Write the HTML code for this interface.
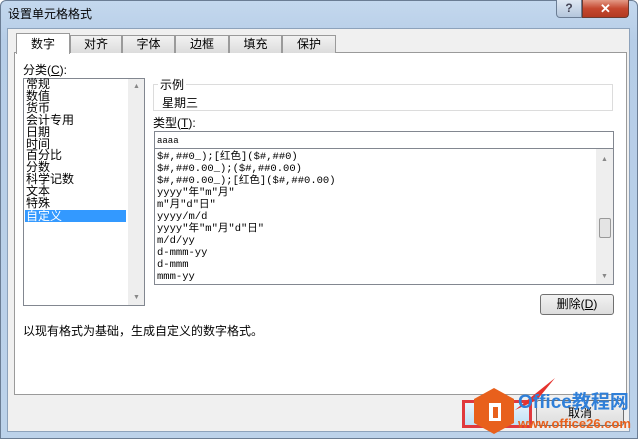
<!DOCTYPE html><html><head><meta charset="utf-8"><style>
*{margin:0;padding:0;box-sizing:border-box}
body{width:638px;height:439px;overflow:hidden;background:#fff;font-family:"Liberation Sans","Noto Sans CJK SC",sans-serif;font-size:12px;color:#000;position:relative}
.a{position:absolute}
.win{left:0;top:0;width:638px;height:439px;background:linear-gradient(#c4d8ee,#b6cde7 40px,#bcd2ea);border:1px solid #6b7d94;border-radius:6px 6px 0 0}
.body{left:7px;top:28px;width:623px;height:404px;background:#f0f0f0;border:1px solid #8da2bb}
.panel{left:14px;top:52px;width:613px;height:343px;background:#fff;border:1px solid #9a9a9a}
.tab{top:35px;height:18px;border:1px solid #9a9a9a;border-bottom:none;background:linear-gradient(#f2f2f2,#dcdcdc);text-align:center;line-height:16px;font-size:12px}
.box{border:1px solid #828790;background:#fff}
.sb{background:#eeeeee}
.mono{font-family:"Liberation Mono","Noto Sans CJK SC",monospace;font-size:10.5px;line-height:12px;white-space:pre}
</style></head><body>
<div class="a win"></div>
<div class="a" style="left:8px;top:5px;font-size:12px">设置单元格格式</div>
<div class="a" style="left:556px;top:0;width:26px;height:18px;background:linear-gradient(#dfe8f3,#b4c6dc);border:1px solid #6b7d94;border-top:none;border-radius:0 0 0 4px;text-align:center;color:#445;font-weight:bold;font-size:12px;line-height:17px">?</div>
<div class="a" style="left:582px;top:0;width:47px;height:18px;background:linear-gradient(#e39a86,#c5482f 50%,#b33a22);border:1px solid #6b3a30;border-top:none;border-radius:0 0 4px 0;text-align:center;color:#fff;font-weight:bold;font-size:13px;line-height:17px">✕</div>
<div class="a body"></div>
<div class="a panel"></div>
<div class="a tab" style="left:16px;top:33px;width:54px;height:21px;background:#fff;z-index:2;line-height:20px">数字</div>
<div class="a tab" style="left:70px;width:52px">对齐</div>
<div class="a tab" style="left:122px;width:53px">字体</div>
<div class="a tab" style="left:175px;width:54px">边框</div>
<div class="a tab" style="left:229px;width:53px">填充</div>
<div class="a tab" style="left:282px;width:54px">保护</div>
<div class="a" style="left:23px;top:61px">分类(<u>C</u>):</div>
<div class="a box" style="left:23px;top:78px;width:122px;height:228px"></div>
<div class="a sb" style="left:128px;top:79px;width:16px;height:226px"></div>
<div class="a" style="left:133px;top:83px;font-size:7px;color:#888">▲</div>
<div class="a" style="left:133px;top:294px;font-size:7px;color:#888">▼</div>
<div class="a" style="left:26px;top:79px;line-height:11.9px;font-size:12px">常规<br>数值<br>货币<br>会计专用<br>日期<br>时间<br>百分比<br>分数<br>科学记数<br>文本<br>特殊</div>
<div class="a" style="left:25px;top:210px;width:101px;height:12px;background:#3399ff;color:#fff;line-height:12px;padding-left:1px">自定义</div>
<div class="a" style="left:153px;top:84px;width:460px;height:27px;border:1px solid #dcdcdc;border-top:none"></div>
<div class="a" style="left:153px;top:84px;width:460px;border-top:1px solid #dcdcdc"></div>
<div class="a" style="left:158px;top:76px;background:#fff;padding:0 2px">示例</div>
<div class="a" style="left:162px;top:94px">星期三</div>
<div class="a" style="left:153px;top:114px">类型(<u>T</u>):</div>
<div class="a box" style="left:154px;top:131px;width:460px;height:18px"></div>
<div class="a mono" style="left:157px;top:135px;font-size:9px">aaaa</div>
<div class="a box" style="left:154px;top:148px;width:460px;height:137px"></div>
<div class="a sb" style="left:596px;top:149px;width:17px;height:135px"></div>
<div class="a" style="left:599px;top:218px;width:12px;height:20px;border:1px solid #999;background:#e4e4e4;border-radius:2px"></div>
<div class="a" style="left:601px;top:156px;font-size:7px;color:#888">▲</div>
<div class="a" style="left:601px;top:273px;font-size:7px;color:#888">▼</div>
<div class="a mono" style="left:157px;top:151px">$#,##0_);[红色]($#,##0)
$#,##0.00_);($#,##0.00)
$#,##0.00_);[红色]($#,##0.00)
yyyy"年"m"月"
m"月"d"日"
yyyy/m/d
yyyy"年"m"月"d"日"
m/d/yy
d-mmm-yy
d-mmm
mmm-yy</div>
<div class="a" style="left:540px;top:294px;width:74px;height:21px;border:1px solid #707070;border-radius:3px;background:linear-gradient(#f2f2f2,#dddddd);text-align:center;line-height:19px">删除(<u>D</u>)</div>
<div class="a" style="left:23px;top:322px">以现有格式为基础，生成自定义的数字格式。</div>
<div class="a" style="left:462px;top:400px;width:70px;height:28px;border:3px solid #e0393e;background:linear-gradient(#e8f4fc,#bfe0f6)"></div>
<div class="a" style="left:536px;top:400px;width:88px;height:26px;border:1px solid #707070;border-radius:3px;background:linear-gradient(#f2f2f2,#dddddd);text-align:center;line-height:24px">取消</div>
<svg class="a" style="left:470px;top:370px" width="168" height="69">
<path d="M45 40 L85 8 L67 30 Z" fill="#e5322d"/>
<path d="M38 0 L58 11 L58 35 L38 46 L18 35 L18 11 Z" transform="translate(-14,18)" fill="#e8601c"/>
<rect x="19" y="33" width="12" height="18" fill="#fff"/><rect x="23" y="37" width="5" height="11" fill="#e8601c"/>
</svg>
<div class="a" style="left:518px;top:393px;font-size:19px;font-weight:bold;color:#2f7fd8;white-space:nowrap;line-height:20px">Office教程网</div>
<div class="a" style="left:518px;top:417px;font-size:13px;font-weight:bold;color:#e8601c;white-space:nowrap;line-height:14px">www.office26.com</div>
</body></html>
